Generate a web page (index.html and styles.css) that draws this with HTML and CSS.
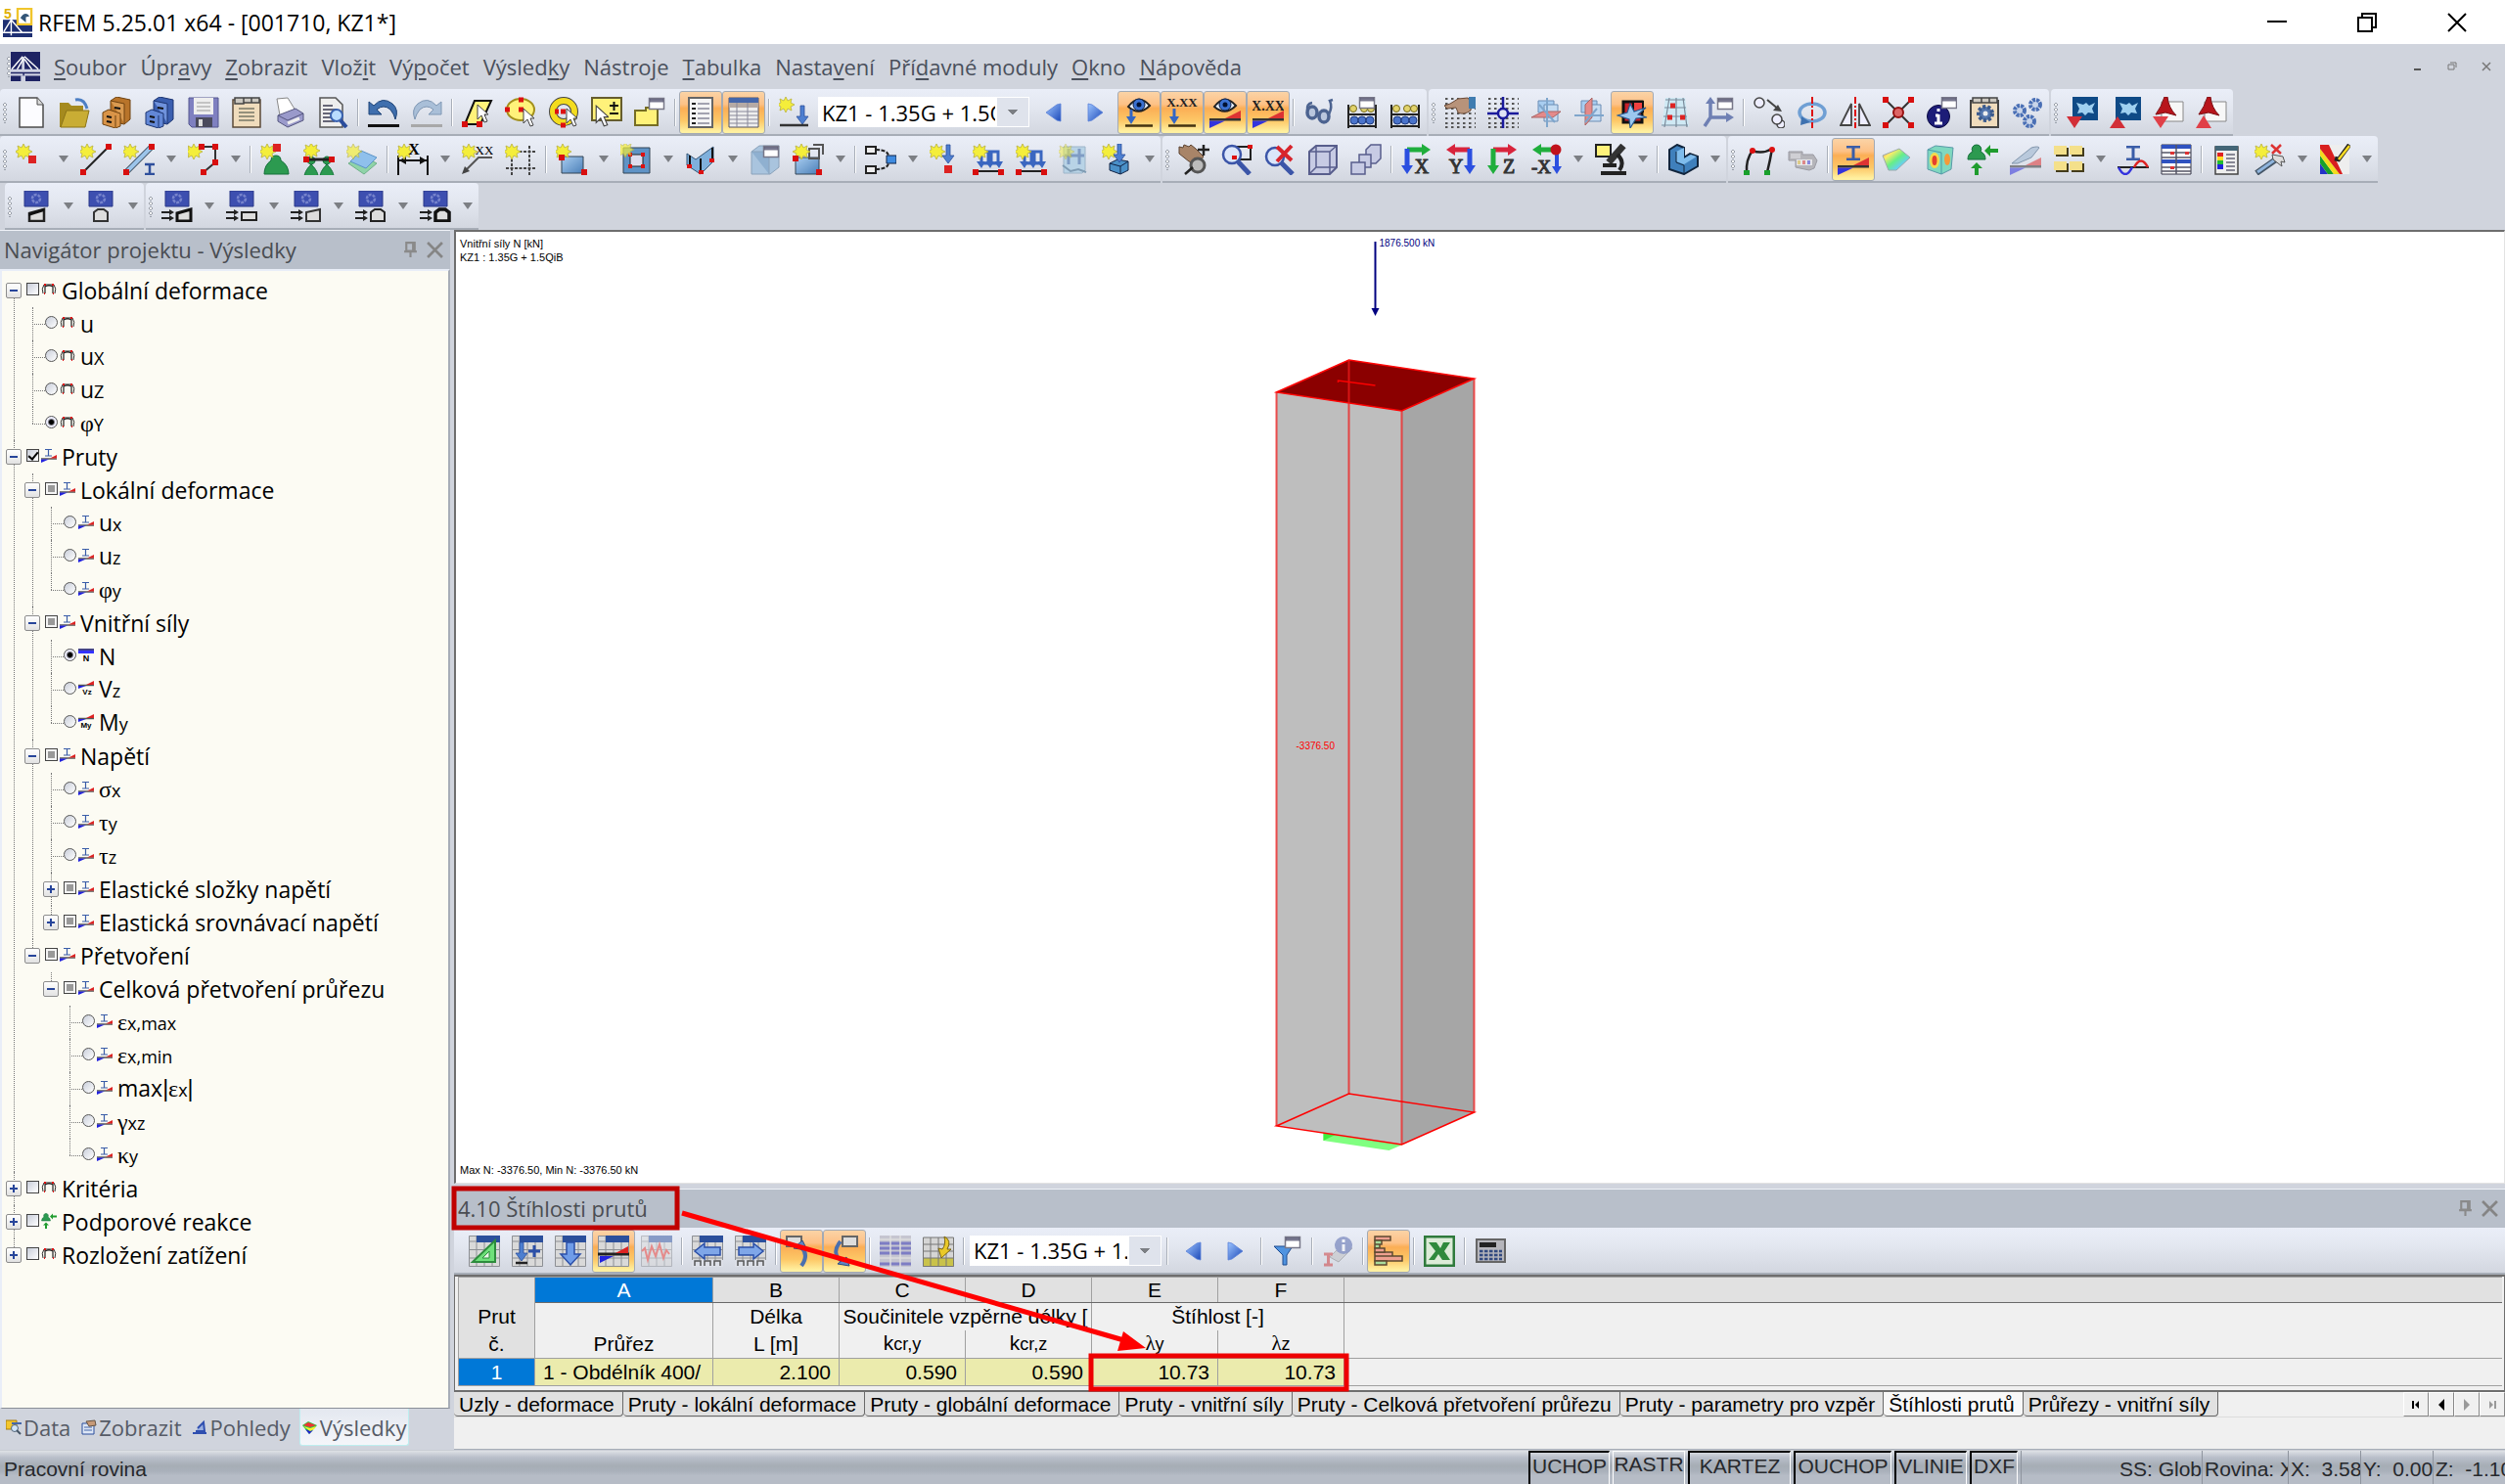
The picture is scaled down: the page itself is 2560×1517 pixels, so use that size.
FILE: index.html
```html
<!DOCTYPE html>
<html lang="cs">
<head>
<meta charset="utf-8">
<title>RFEM 5.25.01 x64 - [001710, KZ1*]</title>
<link rel="stylesheet" href="styles.css">
</head>
<body>
<svg class="defs" aria-hidden="true">
<defs>
<linearGradient id="g-sky" x1="0" y1="0" x2="1" y2="1"><stop offset="0" stop-color="#a9cdf0"/><stop offset="1" stop-color="#4a7fb8"/></linearGradient>
<linearGradient id="g-arr" x1="0" y1="0" x2="1" y2="1"><stop offset="0" stop-color="#9cc4ff"/><stop offset="1" stop-color="#1c49b8"/></linearGradient>
<linearGradient id="g-rain" x1="0" y1="0" x2="1" y2="1"><stop offset="0" stop-color="#f66"/><stop offset=".25" stop-color="#fe6"/><stop offset=".5" stop-color="#6e8"/><stop offset=".75" stop-color="#6cf"/><stop offset="1" stop-color="#88f"/></linearGradient>
<path id="star" d="M7 0l2 4 4-2-1 4 4 2-4 2 1 4-4-2-2 4-2-4-4 2 1-4-4-2 4-2-1-4 4 2z" fill="#f4ee3a" stroke="#b9b13c" stroke-width=".8"/>
<path id="node" d="M0 0h6v6h-6z" fill="#d80f0f"/>
<path id="down" d="M-2 0h4v11h4l-6 8-6-8h4z" fill="#4d7fd0" stroke="#2b4f9c" stroke-width=".8"/>
<path id="beam" d="M9 2h14v2.500h-5.500v10H23V17H9v-2.500h5.500v-10H9z" fill="#3a5da8"/>
<g id="diag"><path d="M0 22h32v2.500H0z" fill="#333"/><path d="M16 22l16-8v8z" fill="#d33"/><path d="M0 24.500h16L0 32z" fill="#33d"/></g>
<g id="sheet"><path d="M0 0h32v32H0z" fill="#d9d9d9"/><path d="M0 6h32M0 14.500h32M0 23h32M8 0v32M16 6v26M24 6v26M.5.500h31v31H.5z" stroke="#8c8f94" fill="none"/><path d="M8 0h24v7H8z" fill="#2b4f9c"/></g>
<g id="win"><path d="M.5.500h15v11H.5z" fill="#fff" stroke="#778" stroke-width="1.500"/><path d="M1 1h14v3.500H1z" fill="#335a"/></g>
<g id="dots"><path d="M1 2h31M1 7h31M1 12h31M1 17h31M1 22h31M1 27h31M1 31h31" stroke="#555" stroke-width="2" stroke-dasharray="2.500 3.500"/></g>
<path id="cone" d="M8 6a4 4 0 1 1 .1 0c3 3 7 8 7 13H1c0-5 4-10 7-13z" fill="#2c9a50" stroke="#14703a"/>
<g id="eye"><path d="M5 10Q16-4 27 9Q16 20 5 10z" fill="#e8f0ff" stroke="#222" stroke-width="2"/><circle cx="16" cy="8" r="6" fill="#3a70d0" stroke="#124"/><circle cx="16" cy="8" r="2.500" fill="#013"/></g>
<g id="abacus"><path d="M2 8v24M30 8v24M2 18h28M2 30h28" stroke="#222" stroke-width="2" fill="none"/><g fill="#e2d36b" stroke="#776b1c"><circle cx="7" cy="12" r="3.500"/><circle cx="18" cy="12" r="3.500"/><circle cx="25" cy="12" r="3.500"/></g><g fill="#4a74cc" stroke="#1f3c80"><circle cx="8" cy="24" r="4"/><circle cx="16" cy="24" r="4"/><circle cx="24" cy="24" r="4"/></g></g>
<g id="cards"><path d="M8 4h16v12H8z" fill="#a8cdf0" stroke="#6b8db5"/><path d="M14 8h14v17H14z" fill="#c5dcf2" stroke="#6b8db5"/></g>
<symbol id="i-app" viewBox="0 0 32 32"><path d="M0 0h32v32H0z" fill="#1e2363"/><path d="M0 19h12V6l3-1v14h17v7H0z" fill="#cfd2e2"/><path d="M13 5L1 19M15 5l15 14M14 7L7 19M15 8l8 11" stroke="#fff" stroke-width="1.500" fill="none"/><path d="M0 23h32M14 22v9" stroke="#1e2363" stroke-width="1.500"/><path d="M11 26h5v6h-5z" fill="#cfd2e2"/></symbol>
<symbol id="i-logo" viewBox="0 0 32 32"><path d="M0 13h32v19H0z" fill="#1e2f72"/><path d="M0 27h32M9 12v18M9 13L1 26M9 13l12 14" stroke="#fff" stroke-width="1.500" fill="none"/><path d="M16 1h15v17H16z" fill="#fff" stroke="#f0c52c" stroke-width="2.500"/><path d="M19 11q5-8 10-2l-4 1v6z" fill="#357"/><text x="1" y="12" font-size="15" font-weight="700" fill="#e0b000" font-family="Liberation Sans">5</text></symbol>
<symbol id="i-new" viewBox="0 0 32 32"><path d="M4 1h18l6 7v23H4z" fill="#fcfcff" stroke="#4b4b4b" stroke-width="1.500"/><path d="M22 1v7h6" fill="#ddd" stroke="#4b4b4b"/></symbol>
<symbol id="i-open" viewBox="0 0 32 32"><path d="M1 31V6h9l3 3h12v22z" fill="#a58a1e"/><path d="M2 31l6-17h23l-4 17z" fill="#c9ad34" stroke="#8c7416"/><path d="M17 3q9-2 12 9" stroke="#4d7fc4" stroke-width="3" fill="none"/></symbol>
<symbol id="i-cab" viewBox="0 0 32 32"><path d="M9 4l6-4 14 3v20l-6 5-14-3z" fill="#b8742a" stroke="#6e4210"/><path d="M9 4l14 3v20" fill="#d99a50" stroke="#6e4210"/><path d="M1 16l6-3 12 4v13l-5 2-13-4z" fill="#d99448" stroke="#6e4210"/><path d="M14 19v12" stroke="#6e4210"/><path d="M5 20l5 1M5 25l5 1M13 11l6 1" stroke="#111" stroke-width="2"/></symbol>
<symbol id="i-cabb" viewBox="0 0 32 32"><path d="M9 4l6-4 14 3v20l-6 5-14-3z" fill="#3b5fb0" stroke="#1c3470"/><path d="M9 4l14 3v20" fill="#6f92dc" stroke="#1c3470"/><path d="M1 16l6-3 12 4v13l-5 2-13-4z" fill="#6287d6" stroke="#1c3470"/><path d="M14 19v12" stroke="#1c3470"/><path d="M5 20l5 1M5 25l5 1M13 11l6 1" stroke="#111" stroke-width="2"/></symbol>
<symbol id="i-save" viewBox="0 0 32 32"><path d="M1 1h30v30H4l-3-3z" fill="#7f80c0" stroke="#55568f"/><path d="M6 1h20v17H6z" fill="#eee"/><path d="M9 6h14M9 10h14M9 14h14" stroke="#999"/><path d="M8 21h17v10H8z" fill="#4a4a5c"/><path d="M11 23h4v7h-4z" fill="#ddd"/></symbol>
<symbol id="i-note" viewBox="0 0 32 32"><path d="M2 3h28v28H2z" fill="#f0dcbc" stroke="#5b4a38" stroke-width="1.500"/><path d="M4 1h9v6H4zM13 1h8v5h-8zM21 1h8v5h-8z" fill="#ccc8c0" stroke="#444" stroke-width="1.500"/><path d="M8 12h16M8 16h16M8 20h16M8 24h16" stroke="#776" stroke-width="1.500"/></symbol>
<symbol id="i-print" viewBox="0 0 32 32"><path d="M3 2l11-1 8 13-16 5z" fill="#fff" stroke="#888"/><path d="M4 19l18-7 8 5v7l-16 7-10-6z" fill="#9a9acb" stroke="#55567f"/><path d="M4 19l10 5 16-7" fill="none" stroke="#55567f"/><path d="M14 27l12-5" stroke="#eee" stroke-width="3"/></symbol>
<symbol id="i-prev" viewBox="0 0 32 32"><path d="M3 1h16l7 7v23H3z" fill="#eee" stroke="#555" stroke-width="1.500"/><path d="M6 9h10M6 13h14M6 17h10M6 21h8M6 25h12" stroke="#667" stroke-width="2"/><circle cx="20" cy="19" r="6" fill="#b9dcff" stroke="#3a62b0" stroke-width="2"/><path d="M24 24l6 7" stroke="#2a4c9c" stroke-width="4"/></symbol>
<symbol id="i-undo" viewBox="0 0 32 32"><path d="M1 5v13h13l-5-5q7-6 14 0 4 5 5 10 4-10-3-16-10-8-19 2z" fill="#3f6fae" stroke="#1f4478"/><path d="M0 28h32v3H0z" fill="#111"/></symbol>
<symbol id="i-redo" viewBox="0 0 32 32"><path d="M31 5v13H18l5-5q-7-6-14 0-4 5-5 10Q0 13 7 7q10-8 19 2z" fill="#a9bfd8" stroke="#7f97b4"/><path d="M0 28h32v3H0z" fill="#a8a8a8"/></symbol>
<symbol id="i-cur" viewBox="0 0 12 20"><path d="M1 1v15l4-4 3 7 3-1-3-7h4z" fill="#fff" stroke="#444"/></symbol>
<symbol id="i-selp" viewBox="0 0 32 32"><path d="M13 4h17L19 28H3z" fill="#fff27a" stroke="#111" stroke-width="2"/><use href="#node" x="0" y="25"/><use href="#node" x="15" y="25"/><use href="#i-cur" x="15" y="7" width="12" height="20"/></symbol>
<symbol id="i-sele" viewBox="0 0 32 32"><ellipse cx="16" cy="13" rx="14" ry="11" fill="#fff27a" stroke="#a3901c" stroke-width="2"/><path d="M14 3h5M14 13h5M0 13h5" stroke="#d11" stroke-width="5"/><use href="#i-cur" x="18" y="11" width="12" height="20"/></symbol>
<symbol id="i-selc" viewBox="0 0 32 32"><circle cx="16" cy="15" r="11" fill="none" stroke="#444" stroke-width="8"/><circle cx="16" cy="15" r="11" fill="none" stroke="#f3dc1e" stroke-width="6"/><path d="M13 15h5M13 29h5M7 15h4" stroke="#d11" stroke-width="5"/><use href="#i-cur" x="18" y="11" width="12" height="20"/></symbol>
<symbol id="i-selr" viewBox="0 0 32 32"><path d="M1 1h30v23H1z" fill="#fff27a" stroke="#665d2e" stroke-width="2"/><path d="M19 9h9M23.500 5v9M19 17h9" stroke="#111" stroke-width="2"/><use href="#i-cur" x="4" y="8" width="14" height="23"/></symbol>
<symbol id="i-seln" viewBox="0 0 32 32"><path d="M1 14h11v-3h12v18H1z" fill="#fff27a" stroke="#766d24" stroke-width="2"/><use href="#win" x="15" y="1"/></symbol>
<symbol id="i-list" viewBox="0 0 32 32"><path d="M4 1h24v30H4z" fill="#f5f5f5" stroke="#666" stroke-width="2"/><path d="M7 7h4M7 12h4M7 17h4M7 22h4M7 27h4" stroke="#222" stroke-width="2"/><path d="M13 7h12M13 12h12M13 17h12M13 22h12M13 27h12" stroke="#889" stroke-width="1.500"/></symbol>
<symbol id="i-tab" viewBox="0 0 32 32"><path d="M1 1h30v30H1z" fill="#eee" stroke="#556"/><path d="M1 1h30v5H1z" fill="#46a"/><path d="M1 6h30v5H1z" fill="#b5aaa5"/><path d="M1 15h30M1 19h30M1 23h30M1 27h30M9 6v25M20 6v25" stroke="#889"/></symbol>
<symbol id="i-load" viewBox="0 0 32 32"><use href="#star"/><use href="#down" x="24" y="9"/><path d="M1 29h29" stroke="#333" stroke-width="2.500"/></symbol>
<symbol id="i-left" viewBox="0 0 32 32"><path d="M24 7v18l-4-1L9 16l11-8z" fill="url(#g-arr)" stroke="#5a80d8" stroke-width=".8"/></symbol>
<symbol id="i-right" viewBox="0 0 32 32"><path d="M8 7v18l4-1 11-8-11-8z" fill="url(#g-arr)" stroke="#5a80d8" stroke-width=".8"/></symbol>
<symbol id="i-eyel" viewBox="0 0 32 32"><use href="#eye"/><path d="M8 13v8" stroke="#3466c4" stroke-width="3"/><path d="M3 20h10l-5 8z" fill="#3466c4"/><path d="M2 29.500h28" stroke="#443311" stroke-width="2.500"/></symbol>
<symbol id="i-xl" viewBox="0 0 32 32"><text x="16" y="10" font-size="13" font-weight="700" text-anchor="middle" font-family="Liberation Serif" fill="#222">X.XX</text><path d="M8 12v10" stroke="#3466c4" stroke-width="3"/><path d="M3 20h10l-5 8z" fill="#3466c4"/><path d="M2 29.500h28" stroke="#443311" stroke-width="2.500"/></symbol>
<symbol id="i-eyed" viewBox="0 0 32 32"><use href="#diag"/><use href="#eye"/></symbol>
<symbol id="i-xd" viewBox="0 0 32 32"><use href="#diag"/><text x="16" y="14" font-size="14" font-weight="700" text-anchor="middle" font-family="Liberation Serif" fill="#222">X.XX</text></symbol>
<symbol id="i-glass" viewBox="0 0 32 32"><ellipse cx="9" cy="16" rx="5" ry="6" fill="#b9c6dd" stroke="#4c6390" stroke-width="3.500"/><ellipse cx="21" cy="20" rx="5" ry="6" fill="#b9c6dd" stroke="#4c6390" stroke-width="3.500"/><path d="M4 14Q3 7 9 6M26 18q4-8 1-14l3-1" fill="none" stroke="#4c6390" stroke-width="2.500"/></symbol>
<symbol id="i-abaw" viewBox="0 0 32 32"><use href="#abacus"/><use href="#win" x="13" y="0"/></symbol>
<symbol id="i-aba" viewBox="0 0 32 32"><use href="#abacus"/></symbol>
<symbol id="i-hand" viewBox="0 0 32 32"><use href="#dots"/><path d="M0 9l6-2 8-5 10-1 3 4v9q-7 5-13 2l-2-5-9 1z" fill="#b8937a" stroke="#6d4c38"/><path d="M25 0h7v12h-7z" fill="#3f7cb0"/></symbol>
<symbol id="i-snap" viewBox="0 0 32 32"><use href="#dots"/><path d="M16 0v32M0 17h32" stroke="#1a1a9c" stroke-width="2.500"/><circle cx="16" cy="17" r="5" fill="#dfe3f5" stroke="#1a1a9c" stroke-width="2.500"/></symbol>
<symbol id="i-plan" viewBox="0 0 32 32"><use href="#cards"/><path d="M1 21l12-6h18l-8 6H6z" fill="#e48a8a" stroke="#a66"/><path d="M17 1v30M9 8l16 18" stroke="#7fa6cc" stroke-width="2"/></symbol>
<symbol id="i-plan2" viewBox="0 0 32 32"><use href="#cards"/><path d="M12 8l7-7v20l-7 8z" fill="#e48a8a" stroke="#a66"/><path d="M1 19h30M12 26l12-14" stroke="#7fa6cc" stroke-width="2"/></symbol>
<symbol id="i-plan3" viewBox="0 0 32 32"><path d="M7 5h19v21H7z" fill="#c8202a" stroke="#111" stroke-width="3"/><path d="M17 5h10v10H17z" fill="#f04040" stroke="#111" stroke-width="2"/><path d="M14 7l4 8 12-4-8 7 9 3-11 1-6 10 -1-9-12-4 10-3z" fill="#9cc8ee" stroke="#2a5a90" stroke-width="1.200"/></symbol>
<symbol id="i-gridr" viewBox="0 0 32 32"><path d="M6 1h20l4 29H2z" fill="#cfe9f4"/><path d="M6 3h20M5 11h22M4 20h24M2 29h27M10 1L5 31M17 1v30M24 1l4 30" stroke="#7a8a9a" stroke-width="1.200"/><path d="M11 9h5M8 21h5M21 21h5" stroke="#d22" stroke-width="5"/></symbol>
<symbol id="i-axw" viewBox="0 0 32 32"><path d="M8 3v18h18M8 21l-6 9" stroke="#6f80b4" stroke-width="3.500" fill="none"/><path d="M3 7l5-7 5 7zM24 16l8 5-8 5z" fill="#6f80b4"/><use href="#win" x="15" y="1"/></symbol>
<symbol id="i-copy" viewBox="0 0 32 32"><g fill="#eef" stroke="#444" stroke-width="1.500"><circle cx="6" cy="6" r="5"/><circle cx="28" cy="28" r="4"/><circle cx="24" cy="23" r="5"/></g><path d="M14 3l12 10" stroke="#444" stroke-width="2"/><path d="M29 15l-9-1 5-6z" fill="#444"/></symbol>
<symbol id="i-rot" viewBox="0 0 32 32"><ellipse cx="16" cy="16" rx="13" ry="9" fill="none" stroke="#6f9fd4" stroke-width="3.500"/><path d="M5 20l9 6-10 3z" fill="#3f72b0"/><path d="M16 0v32" stroke="#d11" stroke-width="2" stroke-dasharray="7 2 2 2"/></symbol>
<symbol id="i-mir" viewBox="0 0 32 32"><path d="M12 7v22H1zM20 7v22h11z" fill="#eef" stroke="#444" stroke-width="1.800"/><path d="M16 0v32" stroke="#d11" stroke-width="2" stroke-dasharray="7 2 2 2"/></symbol>
<symbol id="i-xnode" viewBox="0 0 32 32"><path d="M3 3l26 26M29 3L3 29" stroke="#333" stroke-width="2"/><use href="#node"/><use href="#node" x="26"/><use href="#node" y="26"/><use href="#node" x="26" y="26"/><circle cx="16" cy="16" r="5" fill="#d66" stroke="#911" stroke-width="2"/></symbol>
<symbol id="i-info" viewBox="0 0 32 32"><circle cx="13" cy="20" r="11.500" fill="#1d1d78" stroke="#0a0a40"/><path d="M13 12v3M13 18v9M10 19h3M9 27h8" stroke="#fff" stroke-width="3"/><use href="#win" x="16" y="0"/></symbol>
<symbol id="i-prot" viewBox="0 0 32 32"><path d="M2 4h28v27H2z" fill="#f0dcbc" stroke="#444" stroke-width="2"/><path d="M4 1h9v5H4zM13 1h8v5h-8zM21 1h8v5h-8z" fill="#ccc8c0" stroke="#444" stroke-width="1.500"/><circle cx="17" cy="17" r="7" fill="#5577ae" stroke="#3b5a8c" stroke-width="4" stroke-dasharray="3 2"/><circle cx="17" cy="17" r="2.500" fill="#eee"/></symbol>
<symbol id="i-gear" viewBox="0 0 32 32"><g fill="#c9d5ea" stroke="#4a6fb5" stroke-width="4" stroke-dasharray="3 1"><circle cx="8" cy="14" r="5"/><circle cx="24" cy="8" r="5"/><circle cx="18" cy="25" r="5"/></g></symbol>
<symbol id="i-mdn" viewBox="0 0 32 32"><path d="M6 0h26v24H6z" fill="#0f4a86"/><path d="M10 6l7 2 3-2 3 3 6-3-3 6 2 5-6-1-3 3-3-3-5 1 2-5z" fill="#9fd0f0"/><path d="M0 20h16l-8 12z" fill="#d22f38"/></symbol>
<symbol id="i-mup" viewBox="0 0 32 32"><path d="M6 0h26v24H6z" fill="#0f4a86"/><path d="M10 6l7 2 3-2 3 3 6-3-3 6 2 5-6-1-3 3-3-3-5 1 2-5z" fill="#9fd0f0"/><path d="M0 32h16L8 20z" fill="#d22f38"/></symbol>
<symbol id="i-pdn" viewBox="0 0 32 32"><path d="M9 5h22v20H9z" fill="#f7f7f7" stroke="#888"/><path d="M12 0q-3 10-9 18l10-2 11 3q-8-8-9-19z" fill="#b8151c" stroke="#7c0c10"/><path d="M0 20h16l-8 12z" fill="#e04048"/></symbol>
<symbol id="i-pup" viewBox="0 0 32 32"><path d="M9 5h22v20H9z" fill="#f7f7f7" stroke="#888"/><path d="M12 0q-3 10-9 18l10-2 11 3q-8-8-9-19z" fill="#b8151c" stroke="#7c0c10"/><path d="M0 32h16L8 19z" fill="#e04048"/></symbol>
<symbol id="i-nnode" viewBox="0 0 32 32"><use href="#star" x="1"/><path d="M13 12h8v8h-8z" fill="#d22"/></symbol>
<symbol id="i-nline" viewBox="0 0 32 32"><path d="M3 29L29 3" stroke="#222" stroke-width="2"/><use href="#star"/><use href="#node" x="26"/><use href="#node" y="26"/></symbol>
<symbol id="i-nmem" viewBox="0 0 32 32"><path d="M3 29L28 4" stroke="#345" stroke-width="6"/><path d="M3 29L28 4" stroke="#9cc4ea" stroke-width="4"/><use href="#star"/><use href="#node" x="26"/><use href="#node" y="26"/><path d="M22 21h10M27 21v10M22 31h10" stroke="#2f4f9c" stroke-width="2.500"/></symbol>
<symbol id="i-npoly" viewBox="0 0 32 32"><path d="M14 3h14v16l-12 10" stroke="#333" stroke-width="2" fill="none"/><use href="#star" x="-1"/><use href="#node" x="11"/><use href="#node" x="25"/><use href="#node" x="25" y="16"/><use href="#node" x="13" y="26"/></symbol>
<symbol id="i-nsup" viewBox="0 0 32 32"><path d="M16 12q5 0 5 5 8 5 8 14H4q0-9 7-14 0-5 5-5z" fill="#2c9a50" stroke="#14703a"/><use href="#star"/><path d="M13 0h8v8h-8z" fill="#d22"/></symbol>
<symbol id="i-nsup2" viewBox="0 0 32 32"><use href="#cone" x="0" y="15"/><use href="#cone" x="16" y="15"/><path d="M3 16h26" stroke="#222" stroke-width="3"/><use href="#star" x="1" y="-1"/><use href="#node" y="13"/><use href="#node" x="26" y="13"/></symbol>
<symbol id="i-nsurf" viewBox="0 0 32 32"><path d="M2 20l14-8 15 8-13 11z" fill="#8fd3a8" stroke="#6fb088"/><path d="M4 18l11-11 16 7-11 11z" fill="#8fc0ec" stroke="#5b94c8"/><use href="#star" opacity=".7"/></symbol>
<symbol id="i-ndim" viewBox="0 0 32 32"><path d="M1 12v20M31 12v20M2 17h28" stroke="#111" stroke-width="2"/><path d="M2 17l7-4v8zM30 17l-7-4v8z" fill="#111"/><use href="#star"/><text x="17" y="11" font-size="16" font-weight="700" text-anchor="middle" font-family="Liberation Serif">X</text></symbol>
<symbol id="i-nxx" viewBox="0 0 32 32"><path d="M31 14H17L2 29" stroke="#555" stroke-width="2" fill="none"/><path d="M0 31l3-8 5 5z" fill="#444"/><use href="#star"/><text x="23" y="11" font-size="13" text-anchor="middle" font-family="Liberation Serif">XX</text></symbol>
<symbol id="i-ngrid" viewBox="0 0 32 32"><path d="M7 2v30M25 2v30M1 8h30M1 25h30" stroke="#444" stroke-width="2" stroke-dasharray="3 1.500"/><use href="#star"/></symbol>
<symbol id="i-nrect" viewBox="0 0 32 32"><path d="M6 13h22v17H6z" fill="url(#g-sky)" stroke="#345"/><use href="#star"/><use href="#node" x="3" y="11"/><use href="#node" x="26" y="26"/></symbol>
<symbol id="i-nopen" viewBox="0 0 32 32"><path d="M3 4h27v26H3z" fill="#5f93c6" stroke="#345"/><path d="M10 11h13v12H10z" fill="#dde" stroke="#222"/><g fill="#d11"><path d="M8 9h4v4H8zM21 9h4v4h-4zM8 21h4v4H8zM21 21h4v4h-4z"/></g><use href="#star" opacity=".7" x="-2" y="-2"/></symbol>
<symbol id="i-nwall" viewBox="0 0 32 32"><path d="M2 10l9 6L29 3v15L16 31 2 22z" fill="#7fb0dc" stroke="#357"/><path d="M5 12v12M28 4v12M16 15v12" stroke="#111" stroke-width="2"/><path d="M2 21h5v4H2zM14 27h5v4h-5zM25 15h5v4h-5z" fill="#d11"/></symbol>
<symbol id="i-nsol" viewBox="0 0 32 32"><path d="M2 8l8-6h20v22l-9 7H2z" fill="#a9c4de" stroke="#8aa2ba"/><path d="M2 8h18v23" fill="#8fb0d0" stroke="#8aa2ba"/><use href="#win" x="14" y="2"/></symbol>
<symbol id="i-nset" viewBox="0 0 32 32"><path d="M3 14h24v17H3z" fill="url(#g-sky)" stroke="#345"/><path d="M17 5h10v10H17zM21 1h10v10" fill="none" stroke="#555" stroke-width="2"/><use href="#star" x="2"/><use href="#node" y="12"/><use href="#node" x="24" y="26"/></symbol>
<symbol id="i-comb" viewBox="0 0 32 32"><path d="M1 3h10v7H1zM1 23h10v7H1z" fill="#eee" stroke="#222" stroke-width="2"/><path d="M11 6q12 0 13 6M11 26q12 0 13-6" stroke="#222" stroke-width="2" fill="none" stroke-dasharray="4 1.500"/><path d="M22 12h10v8H22z" fill="#3f8be0" stroke="#124"/></symbol>
<symbol id="i-nnl" viewBox="0 0 32 32"><use href="#star"/><use href="#down" x="19" y="1"/><path d="M15 22h8v8h-8z" fill="#d22"/></symbol>
<symbol id="i-nml" viewBox="0 0 32 32"><path d="M9 8h7v12h-7zM19 8h7v12h-7z" fill="none" stroke="#3a66c0" stroke-width="3"/><path d="M4 18h9l-4 7zM13 18h9l-4 7zM22 18h9l-4 7z" fill="#3a66c0"/><path d="M2 28h28" stroke="#222" stroke-width="2"/><use href="#star"/><use href="#node" y="26"/><use href="#node" x="26" y="26"/></symbol>
<symbol id="i-nsl" viewBox="0 0 32 32"><path d="M5 3h22v24l-3 3H5z" fill="#b8d3e6" stroke="#9db4c8"/><path d="M10 5v16M21 5v16M6 12h20" stroke="#7f9cc4" stroke-width="3"/><path d="M4 22l8 6 8-2 8 3" stroke="#7f9cb4" stroke-width="2" fill="none"/><use href="#star" opacity=".5"/></symbol>
<symbol id="i-nbl" viewBox="0 0 32 32"><path d="M8 20l8-4 11 2v9l-8 4-11-4z" fill="#4a90c8" stroke="#124"/><path d="M8 20l11 3v8M19 23l8-5" fill="none" stroke="#124"/><use href="#star"/><use href="#down" x="18" y="0"/></symbol>
<symbol id="i-pan" viewBox="0 0 32 32"><path d="M1 3l4 1 1-3 5 2 2-2 5 4 8 8-6 8-9-3L1 10z" fill="#a88468" stroke="#5c4432"/><circle cx="20" cy="22" r="7" fill="#bbb" stroke="#555" stroke-width="3"/><path d="M26 1v11M20 6h12M7 31l8-7" stroke="#222" stroke-width="2.500"/></symbol>
<symbol id="i-zwin" viewBox="0 0 32 32"><path d="M12 3h18v13H12z" fill="none" stroke="#222" stroke-width="2"/><circle cx="11" cy="11" r="9" fill="#dbe6fa" stroke="#3b55a8" stroke-width="2.500"/><path d="M17 18l12 13" stroke="#3b55a8" stroke-width="5"/><path d="M11 14h5M27 3h5" stroke="#d11" stroke-width="4"/></symbol>
<symbol id="i-zx" viewBox="0 0 32 32"><circle cx="11" cy="13" r="9" fill="#dbe6fa" stroke="#3b55a8" stroke-width="2.500"/><path d="M17 19l12 12" stroke="#3b55a8" stroke-width="5"/><path d="M13 3l15 14M28 2L13 18" stroke="#d8242c" stroke-width="4"/></symbol>
<symbol id="i-cube" viewBox="0 0 32 32"><path d="M2 8l7-6h21v22l-7 7H2z" fill="#c7cbe4" stroke="#585e8c" stroke-width="2"/><path d="M2 8h21v23M23 8l7-6M9 2v22L2 31M9 24h21" fill="none" stroke="#585e8c" stroke-width="1.500"/></symbol>
<symbol id="i-multi" viewBox="0 0 32 32"><g fill="#c7cbe4" stroke="#585e8c" stroke-width="1.500"><path d="M16 6l5-5h10v14l-5 5H16z"/><path d="M9 11h12v13H9z"/><path d="M1 19h14v12H1z"/></g></symbol>
<symbol id="i-vx" viewBox="0 0 32 32"><path d="M6 6h16" stroke="#1fae3c" stroke-width="5"/><path d="M21 0l9 6-9 6z" fill="#1fae3c"/><path d="M6 5v18" stroke="#2b4fe0" stroke-width="5"/><path d="M0 22h12l-6 9z" fill="#2b4fe0"/><text x="21" y="30" font-size="20" text-anchor="middle" font-family="Liberation Serif" fill="#333" stroke="#333">X</text></symbol>
<symbol id="i-vy" viewBox="0 0 32 32"><path d="M10 6h16" stroke="#d8243c" stroke-width="5"/><path d="M11 0L2 6l9 6z" fill="#d8243c"/><path d="M26 5v18" stroke="#2b4fe0" stroke-width="5"/><path d="M20 22h12l-6 9z" fill="#2b4fe0"/><text x="12" y="30" font-size="20" text-anchor="middle" font-family="Liberation Serif" fill="#333" stroke="#333">Y</text></symbol>
<symbol id="i-vz" viewBox="0 0 32 32"><path d="M6 6h16" stroke="#d8243c" stroke-width="5"/><path d="M21 0l9 6-9 6z" fill="#d8243c"/><path d="M6 5v18" stroke="#1fae3c" stroke-width="5"/><path d="M0 22h12l-6 9z" fill="#1fae3c"/><text x="22" y="30" font-size="20" text-anchor="middle" font-family="Liberation Serif" fill="#333" stroke="#333">Z</text></symbol>
<symbol id="i-vmx" viewBox="0 0 32 32"><path d="M10 6h16" stroke="#1fae3c" stroke-width="5"/><path d="M11 0L2 6l9 6z" fill="#1fae3c"/><path d="M27 5v18" stroke="#2b4fe0" stroke-width="4"/><path d="M22 23h10l-5 8z" fill="#2b4fe0"/><circle cx="26" cy="6" r="5.500" fill="#c1121c"/><text x="11" y="30" font-size="19" text-anchor="middle" font-family="Liberation Serif" fill="#333" stroke="#333">-X</text></symbol>
<symbol id="i-micro" viewBox="0 0 32 32"><path d="M1 1h15v12H1z" fill="#fff27a" stroke="#222" stroke-width="2"/><path d="M29 2L14 19" stroke="#333" stroke-width="7"/><path d="M23 11q8 8 2 16M8 22h14M6 30h26" stroke="#222" stroke-width="4" fill="none"/></symbol>
<symbol id="i-ren" viewBox="0 0 32 32"><path d="M2 6l8-5 7 3v10l6-4 8 3v10l-14 8L2 26z" fill="#3f80bc" stroke="#10243c" stroke-width="2"/><path d="M9 8l8-4v11l7-4 6 2-13 8-8-3z" fill="#7fbcec"/><path d="M9 8v11l8 3v9" stroke="#10243c" fill="none"/></symbol>
<symbol id="i-def" viewBox="0 0 32 32"><path d="M3 30Q2 16 9 7M9 7q10 4 20-2M29 5q-2 12-5 24" stroke="#222" stroke-width="2.500" fill="none"/><circle cx="9" cy="7" r="3" fill="#d11"/><circle cx="29" cy="6" r="3" fill="#d11"/><path d="M0 27h6v5H0zM21 27h6v5h-6z" fill="#19a02c"/></symbol>
<symbol id="i-panel" viewBox="0 0 32 32"><path d="M2 8h14v3h11l4 6-3 8-5 2-14-3v-7H2z" fill="#b5b5ba" stroke="#9a9aa2"/><path d="M4 10h10v5H4z" fill="#cfcfd4"/><path d="M10 16h16v6H10z" fill="#e6e6ea"/><path d="M11 19h3" stroke="#dc8" stroke-width="4"/><path d="M16 19h3" stroke="#d88" stroke-width="4"/><path d="M21 19h3" stroke="#88d" stroke-width="4"/></symbol>
<symbol id="i-memr" viewBox="0 0 32 32"><use href="#diag"/><use href="#beam"/></symbol>
<symbol id="i-surfr" viewBox="0 0 32 32"><path d="M2 12l17-7 11 9-14 13-8 0z" fill="url(#g-rain)" stroke="#9aa"/></symbol>
<symbol id="i-solr" viewBox="0 0 32 32"><path d="M4 6l8-4 18 2-2 22-10 5L4 26z" fill="#7fd8c0" stroke="#5a9aa8"/><path d="M4 6l14 3v22" fill="none" stroke="#4a9aa8"/><ellipse cx="11" cy="17" rx="5" ry="8" fill="#f5d94a"/><ellipse cx="11" cy="17" rx="2.500" ry="5" fill="#e5402c"/><ellipse cx="24" cy="16" rx="3" ry="6" fill="#f59a3a"/></symbol>
<symbol id="i-reac" viewBox="0 0 32 32"><path d="M10 1a4.500 4.500 0 0 1 4 7q5 2 5 8H1q0-6 5-8a4.500 4.500 0 0 1 4-7z" fill="#2c9a50" stroke="#14703a"/><path d="M32 5H24V1l-6 6 6 6V9h8zM8 32V25H4l6-6 6 6h-4v7z" fill="#1f9c2e"/></symbol>
<symbol id="i-sec" viewBox="0 0 32 32"><g opacity=".55"><use href="#diag"/></g><path d="M2 20L22 4q7-2 8 0l-8 10-14 6z" fill="#b9c9dc" stroke="#8296ac"/></symbol>
<symbol id="i-four" viewBox="0 0 32 32"><path d="M3 4h13v9H3zM19 4h13v9H19zM3 20h13v9H3zM19 20h13v9H19z" fill="#443c1c"/><path d="M1 2h13v9H1zM17 2h13v9H17zM1 18h13v9H1zM17 18h13v9H17z" fill="#f4e08a"/></symbol>
<symbol id="i-sino" viewBox="0 0 32 32"><use href="#beam"/><path d="M0 24h32" stroke="#222" stroke-width="2"/><path d="M1 24q7 14 14 0" fill="none" stroke="#33d" stroke-width="2.500"/><path d="M17 24q7-13 14 0" fill="none" stroke="#d22" stroke-width="2.500"/></symbol>
<symbol id="i-rtab" viewBox="0 0 32 32"><path d="M1 1h30v30H1z" fill="#fff" stroke="#334"/><path d="M1 3h30M1 18h30" stroke="#2f52c0" stroke-width="4"/><path d="M1 9h30M1 14h30M1 24h30M1 28h30M16 1v30" stroke="#556" stroke-width="1.500"/><path d="M10 8h4v3h-4zM25 8h4v3h-4zM10 23h4v3h-4z" fill="#d33"/></symbol>
<symbol id="i-leg" viewBox="0 0 32 32"><path d="M4 3h23v28H4z" fill="#eee" stroke="#444" stroke-width="1.500"/><path d="M4 2h23v5H4z" fill="#467"/><path d="M6 9h6v4H6z" fill="#d22"/><path d="M6 13h6v4H6z" fill="#fd2"/><path d="M6 17h6v4H6z" fill="#2b3"/><path d="M6 21h6v5H6z" fill="#22d"/><path d="M15 11h9M15 15h9M15 19h9M15 23h9M15 27h9" stroke="#667" stroke-width="1.500"/></symbol>
<symbol id="i-wand" viewBox="0 0 32 32"><path d="M2 30L22 16" stroke="#456" stroke-width="6"/><path d="M3 29L20 17" stroke="#8fb4dc" stroke-width="3"/><path d="M17 1l10 9M27 1l-9 9" stroke="#d33" stroke-width="2.500"/><use href="#star"/><path d="M18 11l11 2 2 6-4-1 1 5-9-7z" fill="#ddd" stroke="#555"/></symbol>
<symbol id="i-flag" viewBox="0 0 32 32"><path d="M1 1h30v30H1z" fill="#eee"/><path d="M1 31V20l8 11z" fill="#2433c8"/><path d="M1 12l14 19H9L1 20z" fill="#18a02c"/><path d="M1 5l20 26h-6L1 12z" fill="#f3dc1e"/><path d="M1 1h9l14 30h-3L1 5z" fill="#d81f1f"/><path d="M31 1L20 16l-4-1" stroke="#222" stroke-width="4.500" fill="none"/><path d="M31 2L20 16" stroke="#fd2" stroke-width="2.500"/></symbol>
<g id="gearbox"><path d="M4 0h24v16H4z" fill="#3d4fb0" stroke="#2a3988"/><circle cx="16" cy="8" r="4" fill="none" stroke="#7784cc" stroke-width="2.500" stroke-dasharray="3 1"/></g>
<g id="sarr"><path d="M0 22h9M0 28h9" stroke="#222" stroke-width="2"/><path d="M8 19l5 3-5 3zM8 25l5 3-5 3z" fill="#222"/></g>
<symbol id="i-w1" viewBox="0 0 32 32"><use href="#gearbox"/><path d="M9 31v-8l15-4v12z" fill="#ddd" stroke="#222" stroke-width="2.500"/><path d="M8 23l16-5v3L8 26z" fill="#111"/></symbol>
<symbol id="i-w2" viewBox="0 0 32 32"><use href="#gearbox"/><path d="M9 31v-9l4-3h6l4 3v9z" fill="#ddd" stroke="#333" stroke-width="2"/></symbol>
<symbol id="i-w3" viewBox="0 0 32 32"><use href="#gearbox"/><use href="#sarr"/><path d="M16 31v-8l14-4v12z" fill="#ddd" stroke="#111" stroke-width="3"/></symbol>
<symbol id="i-w4" viewBox="0 0 32 32"><use href="#gearbox"/><use href="#sarr"/><path d="M16 30v-8h15v8z" fill="#ddd" stroke="#222" stroke-width="2"/></symbol>
<symbol id="i-w5" viewBox="0 0 32 32"><use href="#gearbox"/><use href="#sarr"/><path d="M16 31v-9l14-3v12z" fill="#ddd" stroke="#333" stroke-width="2"/></symbol>
<symbol id="i-w6" viewBox="0 0 32 32"><use href="#gearbox"/><use href="#sarr"/><path d="M16 31v-9l4-3h6l4 3v9z" fill="#ddd" stroke="#222" stroke-width="2"/></symbol>
<symbol id="i-w7" viewBox="0 0 32 32"><use href="#gearbox"/><use href="#sarr"/><path d="M16 31v-9l4-3h6l4 3v9z" fill="#ddd" stroke="#111" stroke-width="3.500"/></symbol>
<symbol id="i-pin" viewBox="0 0 16 16"><path d="M4 1h8v8H4zM2 9.500h12M8 10v5M10.500 1v8" stroke="#8a8a8a" stroke-width="2" fill="none"/></symbol>
<symbol id="i-x" viewBox="0 0 16 16"><path d="M1 1l14 14M15 1L1 15" stroke="#858585" stroke-width="2.500"/></symbol>
<symbol id="i-t1" viewBox="0 0 32 32"><use href="#sheet"/><path d="M27 5v22H4z" fill="#6fe07a" stroke="#2d8c3c" stroke-width="2"/><path d="M21 16v7h-7z" fill="#e8f5e8" stroke="#2d8c3c"/></symbol>
<symbol id="i-t2" viewBox="0 0 32 32"><use href="#sheet"/><use href="#down" x="10" y="7"/><path d="M4 28h12" stroke="#222" stroke-width="2.500"/><path d="M23 10v12M17 16h12" stroke="#2b4fa8" stroke-width="3"/></symbol>
<symbol id="i-t3" viewBox="0 0 32 32"><use href="#sheet"/><path d="M12 7h8v12h6L16 30 6 19h6z" fill="#6f9ce8" stroke="#2b4fa8" stroke-width="1.500"/></symbol>
<symbol id="i-t4" viewBox="0 0 32 32"><use href="#sheet"/><path d="M0 19h32" stroke="#222" stroke-width="3"/><path d="M18 18l13-7v7z" fill="#d22"/><path d="M2 21h14L2 28z" fill="#22d"/></symbol>
<symbol id="i-t5" viewBox="0 0 32 32"><g opacity=".5"><use href="#sheet"/></g><path d="M1 16l3-3 3 12 4-14 4 10 4-12 4 14 3-8 3 4" stroke="#e58a8a" stroke-width="2" fill="none"/></symbol>
<symbol id="i-t6" viewBox="0 0 32 32"><use href="#sheet"/><path d="M0 25h32v7H0z" fill="#dde0e8"/><path d="M3 31v-5h6v5M13 31v-5h6v5M23 31v-5h6v5" stroke="#555" stroke-width="1.500" fill="none"/><path d="M13 8v4h16v8H13v4L3 16z" fill="#7fa6e8" stroke="#2b4fa8" stroke-width="1.500"/></symbol>
<symbol id="i-t7" viewBox="0 0 32 32"><use href="#sheet"/><path d="M0 25h32v7H0z" fill="#dde0e8"/><path d="M3 31v-5h6v5M13 31v-5h6v5M23 31v-5h6v5" stroke="#555" stroke-width="1.500" fill="none"/><path d="M19 8v4H4v8h15v4l10-8z" fill="#7fa6e8" stroke="#2b4fa8" stroke-width="1.500"/></symbol>
<symbol id="i-t8" viewBox="0 0 32 32"><path d="M1 1h15v10H1z" fill="#ddd" stroke="#666" stroke-width="2"/><path d="M16 12q8 8 0 19" stroke="#4a6fae" stroke-width="4" fill="none"/><path d="M8 13l9-8 5 10z" fill="#5f86c4" stroke="#2b4a80"/></symbol>
<symbol id="i-t9" viewBox="0 0 32 32"><path d="M14 1h15v10H14z" fill="#ddd" stroke="#666" stroke-width="2"/><path d="M12 6q-10 12 1 20" stroke="#4a6fae" stroke-width="4" fill="none"/><path d="M9 29l9-7 3 9z" fill="#5f86c4" stroke="#2b4a80"/></symbol>
<symbol id="i-t10" viewBox="0 0 32 32"><path d="M0 0h32v32H0z" fill="#c5c5d0"/><path d="M0 8h32M0 13h32M0 18h32M0 29h32" stroke="#7d7dc4" stroke-width="3"/><path d="M11 0v32M21 0v32M0 4h32M0 23h32" stroke="#ddd" stroke-width="1.500"/></symbol>
<symbol id="i-t11" viewBox="0 0 32 32"><path d="M0 2h32v30H0z" fill="#d5d5d5"/><path d="M0 23h32v9H0z" fill="#c9c24a"/><path d="M0 9h32M0 16h32M0 23h32M8 2v30M16 2v30M24 2v30M.5 2v29.500h31V2z" stroke="#777" fill="none"/><path d="M22 1q8 4 3 13h4L19 23l-3-10 4 1q4-5 2-13z" fill="#e9c928" stroke="#7a6412"/></symbol>
<symbol id="i-filt" viewBox="0 0 32 32"><path d="M3 11h19l-6 9v10h-4V20z" fill="#4f93e0" stroke="#1f4c90"/><use href="#win" x="14" y="1"/></symbol>
<symbol id="i-tinf" viewBox="0 0 32 32"><g opacity=".45"><path d="M8 22L22 8l9 5-14 14z" fill="#bbb" stroke="#777"/><circle cx="22" cy="10" r="9" fill="#3a4fa0"/><path d="M22 4v3M22 9v7" stroke="#fff" stroke-width="3"/><path d="M2 19h9M6.500 19v11M2 30h9" stroke="#c22" stroke-width="3"/></g></symbol>
<symbol id="i-bars" viewBox="0 0 32 32"><g stroke="#5e4a30" stroke-width="1.500"><path d="M2 1h16v4H2zM2 17h18v4H2zM2 21h28v5H2z" fill="#eea090"/><path d="M2 5h7v4H2zM2 9h5v4H2zM2 26h12v4H2z" fill="#a8dc9c"/><path d="M2 13h10v4H2z" fill="#eea090"/></g></symbol>
<symbol id="i-xls" viewBox="0 0 32 32"><path d="M1 1h30v30H1z" fill="#dcecd8" stroke="#2f7a3c" stroke-width="3"/><path d="M5 7h8l4 6 3-6h7l-6 9 6 9h-8l-4-6-4 6H5l7-9z" fill="#2f8a3c"/></symbol>
<symbol id="i-calc" viewBox="0 0 32 32"><path d="M2 4h29v23H2z" fill="#b5b5bb" stroke="#666" stroke-width="2"/><path d="M5 7h17v5H5z" fill="#222"/><path d="M5 16h23M5 20h23M5 24h23" stroke="#334a80" stroke-width="2.500" stroke-dasharray="3.500 1.500"/></symbol>
<symbol id="i-frame" viewBox="0 0 16 16"><path d="M4 12V3h8v9M4 5q4-2 8 0" fill="none" stroke="#222" stroke-width="1.200"/><path d="M2 12Q0 7 3 3M14 12q2-5-1-9" fill="none" stroke="#333"/><path d="M3 2h2v2H3zM11 2h2v2h-2zM3 11h1v2H3zM12 11h1v2h-1z" fill="#d11"/></symbol>
<symbol id="i-tm" viewBox="0 0 16 16"><path d="M4 1.500h7M7.500 2v6M4 8h7" stroke="#3a5da8" stroke-width="1.200"/><path d="M0 11h16" stroke="#555" stroke-width="1.500"/><path d="M9 10.500l7-3.500v3.500z" fill="#d22"/><path d="M0 11.500h8L0 15z" fill="#22d"/></symbol>
<symbol id="i-tn" viewBox="0 0 16 16"><path d="M0 1h16v5H0z" fill="#33f"/><path d="M0 1h16v2H0z" fill="#448"/><text x="8" y="14" font-size="9" font-weight="700" text-anchor="middle" font-family="Liberation Sans">N</text></symbol>
<symbol id="i-tv" viewBox="0 0 16 16"><path d="M0 4.500h16" stroke="#555" stroke-width="1.500"/><path d="M8 4l8-4v4z" fill="#d22"/><path d="M0 5h8l-8 3z" fill="#22d"/><text x="9" y="14" font-size="8" font-weight="700" text-anchor="middle" font-family="Liberation Sans">Vz</text></symbol>
<symbol id="i-ty" viewBox="0 0 16 16"><path d="M0 4.500h16" stroke="#555" stroke-width="1.500"/><path d="M8 4l8-4v4z" fill="#d22"/><path d="M0 5h8l-8 3z" fill="#22d"/><text x="8" y="14" font-size="8" font-weight="700" text-anchor="middle" font-family="Liberation Sans">My</text></symbol>
</defs>
</svg>

<header class="titlebar">
  <svg class="logo"><use href="#i-logo"/></svg>
  <h1>RFEM 5.25.01 x64 - [001710, KZ1*]</h1>
  <div class="wbtns">
    <button aria-label="Minimalizovat"><svg viewBox="0 0 20 20"><path d="M0 9h20" stroke="#000" stroke-width="2"/></svg></button>
    <button aria-label="Obnovit"><svg viewBox="0 0 20 20"><path d="M1 5h14v14H1zM5 5V1h14v14h-4" fill="none" stroke="#000" stroke-width="2"/></svg></button>
    <button aria-label="Zavřít"><svg viewBox="0 0 20 20"><path d="M1 1l18 18M19 1L1 19" stroke="#000" stroke-width="2"/></svg></button>
  </div>
</header>

<nav class="menubar">
  <span class="grip"></span>
  <svg class="app"><use href="#i-app"/></svg>
  <button><u>S</u>oubor</button><button>Úpr<u>a</u>vy</button><button><u>Z</u>obrazit</button><button>Vlož<u>i</u>t</button><button>Vý<u>p</u>očet</button><button>Výsled<u>k</u>y</button><button>Nástro<u>j</u>e</button><button><u>T</u>abulka</button><button>Nasta<u>v</u>ení</button><button>Pří<u>d</u>avné moduly</button><button><u>O</u>kno</button><button><u>N</u>ápověda</button>
  <div class="mdi">
    <button aria-label="Minimalizovat okno"><svg viewBox="0 0 10 10"><path d="M1 8h7" stroke="#555" stroke-width="2"/></svg></button>
    <button aria-label="Obnovit okno"><svg viewBox="0 0 10 10"><path d="M1 3h6v5H1zM3 1h6v5" fill="none" stroke="#777"/></svg></button>
    <button aria-label="Zavřít okno"><svg viewBox="0 0 10 10"><path d="M1 1l8 8M9 1L1 9" stroke="#777" stroke-width="1.500"/></svg></button>
  </div>
</nav>

<div class="bars">
<div class="barrow">
  <div class="bar"><span class="grip"></span>
    <button aria-label="Nový"><svg><use href="#i-new"/></svg></button><button aria-label="Otevřít"><svg><use href="#i-open"/></svg></button><button aria-label="Archiv"><svg><use href="#i-cab"/></svg></button><button aria-label="Bloky"><svg><use href="#i-cabb"/></svg></button><button aria-label="Uložit"><svg><use href="#i-save"/></svg></button><button aria-label="Protokol"><svg><use href="#i-note"/></svg></button><button aria-label="Tisk"><svg><use href="#i-print"/></svg></button><button aria-label="Náhled"><svg><use href="#i-prev"/></svg></button><i></i>
    <button aria-label="Zpět"><svg><use href="#i-undo"/></svg></button><button aria-label="Znovu"><svg><use href="#i-redo"/></svg></button><i></i>
    <button aria-label="Výběr rovnoběžníkem"><svg><use href="#i-selp"/></svg></button><button aria-label="Výběr elipsou"><svg><use href="#i-sele"/></svg></button><button aria-label="Výběr mezikružím"><svg><use href="#i-selc"/></svg></button><button aria-label="Výběr přidat"><svg><use href="#i-selr"/></svg></button><button aria-label="Speciální výběr"><svg><use href="#i-seln"/></svg></button><i></i>
    <button class="on" aria-label="Navigátor"><svg><use href="#i-list"/></svg></button><button class="on" aria-label="Tabulky"><svg><use href="#i-tab"/></svg></button><i></i>
    <button aria-label="Nový zatěžovací stav"><svg><use href="#i-load"/></svg></button>
    <select class="combo" aria-label="Zatěžovací stav"><option>KZ1 - 1.35G + 1.5QiB</option></select>
    <button aria-label="Předchozí"><svg><use href="#i-left"/></svg></button><button aria-label="Další"><svg><use href="#i-right"/></svg></button>
    <button class="on" aria-label="Zobrazit zatížení"><svg><use href="#i-eyel"/></svg></button><button class="on" aria-label="Hodnoty zatížení"><svg><use href="#i-xl"/></svg></button><button class="on" aria-label="Zobrazit výsledky"><svg><use href="#i-eyed"/></svg></button><button class="on" aria-label="Hodnoty výsledků"><svg><use href="#i-xd"/></svg></button><i></i>
    <button aria-label="Kontrola"><svg><use href="#i-glass"/></svg></button><button aria-label="Výpočet vybraných"><svg><use href="#i-abaw"/></svg></button><button aria-label="Spočítat vše"><svg><use href="#i-aba"/></svg></button>
  </div>
  <div class="bar"><span class="grip"></span>
    <button aria-label="Rastr"><svg><use href="#i-hand"/></svg></button><button aria-label="Uchop"><svg><use href="#i-snap"/></svg></button><button aria-label="Rovina XY"><svg><use href="#i-plan"/></svg></button><button aria-label="Rovina YZ"><svg><use href="#i-plan2"/></svg></button><button class="on" aria-label="Rovina XZ"><svg><use href="#i-plan3"/></svg></button><button aria-label="Pomocný rastr"><svg><use href="#i-gridr"/></svg></button><button aria-label="Souřadný systém"><svg><use href="#i-axw"/></svg></button><i></i>
    <button aria-label="Kopírovat"><svg><use href="#i-copy"/></svg></button><button aria-label="Rotace"><svg><use href="#i-rot"/></svg></button><button aria-label="Zrcadlit"><svg><use href="#i-mir"/></svg></button><button aria-label="Spojit"><svg><use href="#i-xnode"/></svg></button><button aria-label="Informace"><svg><use href="#i-info"/></svg></button><button aria-label="Nastavení protokolu"><svg><use href="#i-prot"/></svg></button><button aria-label="Možnosti"><svg><use href="#i-gear"/></svg></button>
  </div>
  <div class="bar"><span class="grip"></span>
    <button aria-label="Import"><svg><use href="#i-mdn"/></svg></button><button aria-label="Export"><svg><use href="#i-mup"/></svg></button><button aria-label="Import modelu"><svg><use href="#i-pdn"/></svg></button><button aria-label="Export modelu"><svg><use href="#i-pup"/></svg></button>
  </div>
</div>
<div class="barrow">
  <div class="bar"><span class="grip"></span>
    <button class="dd" aria-label="Nový uzel"><svg><use href="#i-nnode"/></svg></button><button aria-label="Nová linie"><svg><use href="#i-nline"/></svg></button><button class="dd" aria-label="Nový prut"><svg><use href="#i-nmem"/></svg></button><button class="dd" aria-label="Nová polylinie"><svg><use href="#i-npoly"/></svg></button><i></i>
    <button aria-label="Uzlová podpora"><svg><use href="#i-nsup"/></svg></button><button aria-label="Liniová podpora"><svg><use href="#i-nsup2"/></svg></button><button aria-label="Podpora plochy"><svg><use href="#i-nsurf"/></svg></button><i></i>
    <button class="dd" aria-label="Kóta"><svg><use href="#i-ndim"/></svg></button><button aria-label="Komentář"><svg><use href="#i-nxx"/></svg></button><button aria-label="Pomocné linie"><svg><use href="#i-ngrid"/></svg></button><i></i>
    <button class="dd" aria-label="Nová plocha"><svg><use href="#i-nrect"/></svg></button><button class="dd" aria-label="Otvor"><svg><use href="#i-nopen"/></svg></button><button class="dd" aria-label="Stěna"><svg><use href="#i-nwall"/></svg></button><button aria-label="Těleso"><svg><use href="#i-nsol"/></svg></button><button class="dd" aria-label="Sada"><svg><use href="#i-nset"/></svg></button><i></i>
    <button class="dd" aria-label="Kombinace"><svg><use href="#i-comb"/></svg></button><button aria-label="Zatížení na uzel"><svg><use href="#i-nnl"/></svg></button><button aria-label="Zatížení na prut"><svg><use href="#i-nml"/></svg></button><button aria-label="Zatížení na linii"><svg><use href="#i-nml"/></svg></button><button aria-label="Zatížení na plochu"><svg><use href="#i-nsl"/></svg></button><button class="dd" aria-label="Zatížení na těleso"><svg><use href="#i-nbl"/></svg></button>
  </div>
  <div class="bar"><span class="grip"></span>
    <button aria-label="Posun"><svg><use href="#i-pan"/></svg></button><button aria-label="Zoom oknem"><svg><use href="#i-zwin"/></svg></button><button aria-label="Zobrazit vše"><svg><use href="#i-zx"/></svg></button><button aria-label="Izometrie"><svg><use href="#i-cube"/></svg></button><button aria-label="Pohledy"><svg><use href="#i-multi"/></svg></button><i></i>
    <button aria-label="Pohled X"><svg><use href="#i-vx"/></svg></button><button aria-label="Pohled Y"><svg><use href="#i-vy"/></svg></button><button aria-label="Pohled Z"><svg><use href="#i-vz"/></svg></button><button class="dd" aria-label="Pohled -X"><svg><use href="#i-vmx"/></svg></button><button class="dd" aria-label="Viditelnosti"><svg><use href="#i-micro"/></svg></button><i></i>
    <button class="dd" aria-label="Rendering"><svg><use href="#i-ren"/></svg></button>
  </div>
  <div class="bar"><span class="grip"></span>
    <button aria-label="Deformace"><svg><use href="#i-def"/></svg></button><button aria-label="Panel"><svg><use href="#i-panel"/></svg></button><i></i>
    <button class="on" aria-label="Pruty"><svg><use href="#i-memr"/></svg></button><button aria-label="Plochy"><svg><use href="#i-surfr"/></svg></button><button aria-label="Tělesa"><svg><use href="#i-solr"/></svg></button><button aria-label="Reakce"><svg><use href="#i-reac"/></svg></button><button aria-label="Řezy"><svg><use href="#i-sec"/></svg></button><button class="dd" aria-label="Okna výsledků"><svg><use href="#i-four"/></svg></button><button aria-label="Průběhy"><svg><use href="#i-sino"/></svg></button><button aria-label="Tabulky výsledků"><svg><use href="#i-rtab"/></svg></button><i></i>
    <button aria-label="Legenda"><svg><use href="#i-leg"/></svg></button><button class="dd" aria-label="Upravit"><svg><use href="#i-wand"/></svg></button><button class="dd" aria-label="Barvy"><svg><use href="#i-flag"/></svg></button>
  </div>
</div>
<div class="barrow last">
  <div class="bar"><span class="grip"></span><button class="dd" aria-label="Střecha 1"><svg><use href="#i-w1"/></svg></button><button class="dd" aria-label="Střecha 2"><svg><use href="#i-w2"/></svg></button></div>
  <div class="bar"><span class="grip"></span><button class="dd" aria-label="Vítr 1"><svg><use href="#i-w3"/></svg></button><button class="dd" aria-label="Vítr 2"><svg><use href="#i-w4"/></svg></button><button class="dd" aria-label="Vítr 3"><svg><use href="#i-w5"/></svg></button><button class="dd" aria-label="Vítr 4"><svg><use href="#i-w6"/></svg></button><button class="dd" aria-label="Vítr 5"><svg><use href="#i-w7"/></svg></button></div>
</div>
</div>

<main class="work">
<aside class="navi">
  <div class="phead"><h2>Navigátor projektu - Výsledky</h2><button aria-label="Připnout"><svg><use href="#i-pin"/></svg></button><button aria-label="Zavřít panel"><svg><use href="#i-x"/></svg></button></div>
  <div class="treebox">
  <ul class="tree">
    <li><div class="row"><button class="ex minus" aria-label="Sbalit"></button><label><input type="checkbox"><svg><use href="#i-frame"/></svg><span>Globální deformace</span></label></div>
      <ul>
        <li><div class="row"><label><input type="radio" name="gd"><svg><use href="#i-frame"/></svg><span>u</span></label></div></li>
        <li><div class="row"><label><input type="radio" name="gd"><svg><use href="#i-frame"/></svg><span>u<small>X</small></span></label></div></li>
        <li><div class="row"><label><input type="radio" name="gd"><svg><use href="#i-frame"/></svg><span>u<small>Z</small></span></label></div></li>
        <li><div class="row"><label><input type="radio" name="gd" checked><svg><use href="#i-frame"/></svg><span><em>φ</em><small>Y</small></span></label></div></li>
      </ul></li>
    <li><div class="row"><button class="ex minus" aria-label="Sbalit"></button><label><input type="checkbox" checked><svg><use href="#i-tm"/></svg><span>Pruty</span></label></div>
      <ul>
        <li><div class="row"><button class="ex minus" aria-label="Sbalit"></button><label><input type="checkbox" class="mix"><svg><use href="#i-tm"/></svg><span>Lokální deformace</span></label></div>
          <ul>
            <li><div class="row"><label><input type="radio" name="ld"><svg><use href="#i-tm"/></svg><span>u<small>x</small></span></label></div></li>
            <li><div class="row"><label><input type="radio" name="ld"><svg><use href="#i-tm"/></svg><span>u<small>z</small></span></label></div></li>
            <li><div class="row"><label><input type="radio" name="ld"><svg><use href="#i-tm"/></svg><span><em>φ</em><small>y</small></span></label></div></li>
          </ul></li>
        <li><div class="row"><button class="ex minus" aria-label="Sbalit"></button><label><input type="checkbox" class="mix"><svg><use href="#i-tm"/></svg><span>Vnitřní síly</span></label></div>
          <ul>
            <li><div class="row"><label><input type="radio" name="ld" checked><svg><use href="#i-tn"/></svg><span>N</span></label></div></li>
            <li><div class="row"><label><input type="radio" name="ld"><svg><use href="#i-tv"/></svg><span>V<small>z</small></span></label></div></li>
            <li><div class="row"><label><input type="radio" name="ld"><svg><use href="#i-ty"/></svg><span>M<small>y</small></span></label></div></li>
          </ul></li>
        <li><div class="row"><button class="ex minus" aria-label="Sbalit"></button><label><input type="checkbox" class="mix"><svg><use href="#i-tm"/></svg><span>Napětí</span></label></div>
          <ul>
            <li><div class="row"><label><input type="radio" name="ld"><svg><use href="#i-tm"/></svg><span><em>σ</em><small>x</small></span></label></div></li>
            <li><div class="row"><label><input type="radio" name="ld"><svg><use href="#i-tm"/></svg><span><em>τ</em><small>y</small></span></label></div></li>
            <li><div class="row"><label><input type="radio" name="ld"><svg><use href="#i-tm"/></svg><span><em>τ</em><small>z</small></span></label></div></li>
            <li><div class="row"><button class="ex" aria-label="Rozbalit"></button><label><input type="checkbox" class="mix"><svg><use href="#i-tm"/></svg><span>Elastické složky napětí</span></label></div></li>
            <li><div class="row"><button class="ex" aria-label="Rozbalit"></button><label><input type="checkbox" class="mix"><svg><use href="#i-tm"/></svg><span>Elastická srovnávací napětí</span></label></div></li>
          </ul></li>
        <li><div class="row"><button class="ex minus" aria-label="Sbalit"></button><label><input type="checkbox" class="mix"><svg><use href="#i-tm"/></svg><span>Přetvoření</span></label></div>
          <ul>
            <li><div class="row"><button class="ex minus" aria-label="Sbalit"></button><label><input type="checkbox" class="mix"><svg><use href="#i-tm"/></svg><span>Celková přetvoření průřezu</span></label></div>
              <ul>
                <li><div class="row"><label><input type="radio" name="ld"><svg><use href="#i-tm"/></svg><span><em>ε</em><small>x,max</small></span></label></div></li>
                <li><div class="row"><label><input type="radio" name="ld"><svg><use href="#i-tm"/></svg><span><em>ε</em><small>x,min</small></span></label></div></li>
                <li><div class="row"><label><input type="radio" name="ld"><svg><use href="#i-tm"/></svg><span>max<b>|</b><em>ε</em><small>x</small><b>|</b></span></label></div></li>
                <li><div class="row"><label><input type="radio" name="ld"><svg><use href="#i-tm"/></svg><span><em>γ</em><small>xz</small></span></label></div></li>
                <li><div class="row"><label><input type="radio" name="ld"><svg><use href="#i-tm"/></svg><span><em>κ</em><small>y</small></span></label></div></li>
              </ul></li>
          </ul></li>
      </ul></li>
    <li><div class="row"><button class="ex" aria-label="Rozbalit"></button><label><input type="checkbox"><svg><use href="#i-frame"/></svg><span>Kritéria</span></label></div></li>
    <li><div class="row"><button class="ex" aria-label="Rozbalit"></button><label><input type="checkbox"><svg><use href="#i-reac"/></svg><span>Podporové reakce</span></label></div></li>
    <li><div class="row"><button class="ex" aria-label="Rozbalit"></button><label><input type="checkbox"><svg><use href="#i-frame"/></svg><span>Rozložení zatížení</span></label></div></li>
  </ul>
  </div>
  <div class="ntabs">
    <button><svg viewBox="0 0 16 16"><path d="M0 1h11v9H0z" fill="#f3c62c" stroke="#a67c10"/><path d="M6 3h10v2H6z" fill="#46a"/><circle cx="9" cy="9" r="3.500" fill="#cfe4fa" stroke="#567"/><path d="M11 11l4 4" stroke="#456" stroke-width="2"/></svg>Data</button>
    <button><svg viewBox="0 0 16 16"><path d="M1 4h12v11H1z" fill="#dde6f5" stroke="#2b4f9c"/><path d="M3 8h8M3 11h8" stroke="#46a"/><path d="M5 2l9-1 1 5-7 1z" fill="#c79a78" stroke="#654"/></svg>Zobrazit</button>
    <button><svg viewBox="0 0 16 16"><path d="M1 14h14M4 12h9L12 3 6 9" fill="#9bb0e0" stroke="#2f4fb0" stroke-width="2"/></svg>Pohledy</button>
    <button class="cur"><svg viewBox="0 0 16 16"><path d="M0 6l6-4 9 4-8 9z" fill="#2bd04a"/><path d="M1 6l5-3 8 3-6 2z" fill="#e33"/><path d="M1 7l7 2 6-2-2 3-4 2z" fill="#fe3"/><path d="M3 10l5 2 3-1-4 4z" fill="#22c"/></svg>Výsledky</button>
  </div>
</aside>

<section class="right">
  <div class="view">
    <p class="cap">Vnitřní síly N [kN]<br>KZ1 : 1.35G + 1.5QiB</p>
    <svg class="model" viewBox="0 0 2092 972" role="img" aria-label="Sloup s osovou silou">
      <path d="M886 921v8l67 10 14-6z" fill="#80ff80"/><path d="M886 921v8l12-6z" fill="#3cf03c"/>
      <path d="M838 164l128 19v750l-128-19z" fill="#bebebe"/>
      <path d="M966 183l74-33v750l-74 33z" fill="#a6a6a6"/>
      <path d="M912 131l128 19-74 33-128-19z" fill="#8b0000" stroke="#f00" stroke-width="1.500"/>
      <path d="M838 164v750M966 183v750M1040 150v750M912 131v750" stroke="#f01c1c" stroke-opacity=".75" stroke-width="2"/>
      <path d="M838 914l74-33 128 19-74 33z" fill="none" stroke="#f00" stroke-width="1.500"/>
      <path d="M901 154v-2l38 5" fill="none" stroke="#f00" stroke-width="1.500"/>
      <path d="M939 10v70" stroke="#000080" stroke-width="2"/><path d="M935 78h8l-4 8z" fill="#000080"/>
      <text x="943" y="15" class="ld">1876.500 kN</text>
      <text x="858" y="529" class="rv">-3376.50</text>
    </svg>
    <p class="cap">Max N: -3376.50, Min N: -3376.50 kN</p>
  </div>
  <div class="tpanel">
    <div class="phead"><h2>4.10 Štíhlosti prutů</h2><button aria-label="Připnout"><svg><use href="#i-pin"/></svg></button><button aria-label="Zavřít panel"><svg><use href="#i-x"/></svg></button></div>
    <div class="bar tbar">
      <button aria-label="Geometrie"><svg><use href="#i-t1"/></svg></button><button aria-label="Zatížení"><svg><use href="#i-t2"/></svg></button><button aria-label="Stavy"><svg><use href="#i-t3"/></svg></button><button class="on" aria-label="Výsledky"><svg><use href="#i-t4"/></svg></button><button aria-label="Dynamika"><svg><use href="#i-t5"/></svg></button><i></i>
      <button aria-label="Předchozí tabulka"><svg><use href="#i-t6"/></svg></button><button aria-label="Další tabulka"><svg><use href="#i-t7"/></svg></button><i></i>
      <button class="on" aria-label="Synchronizace výběru"><svg><use href="#i-t8"/></svg></button><button class="on" aria-label="Synchronizace tabulky"><svg><use href="#i-t9"/></svg></button><i></i>
      <button aria-label="Vybrané objekty"><svg><use href="#i-t10"/></svg></button><button aria-label="Obarvit řádky"><svg><use href="#i-t11"/></svg></button><i></i>
      <select class="combo small" aria-label="Kombinace zatížení"><option>KZ1 - 1.35G + 1.5QiB</option></select><i></i>
      <button aria-label="Předchozí stav"><svg><use href="#i-left"/></svg></button><button aria-label="Další stav"><svg><use href="#i-right"/></svg></button><i></i>
      <button aria-label="Filtr"><svg><use href="#i-filt"/></svg></button><i></i><button aria-label="Průřez"><svg><use href="#i-tinf"/></svg></button><i></i><button class="on" aria-label="Sloupce"><svg><use href="#i-bars"/></svg></button><i></i><button aria-label="Export do Excelu"><svg><use href="#i-xls"/></svg></button><i></i><button aria-label="Kalkulačka"><svg><use href="#i-calc"/></svg></button>
    </div>
    <div class="grid">
      <table>
        <colgroup><col class="c0"><col class="ca"><col class="cn"><col class="cn"><col class="cn"><col class="cn"><col class="cn"><col></colgroup>
        <thead>
          <tr class="let"><th></th><th class="sel">A</th><th>B</th><th>C</th><th>D</th><th>E</th><th>F</th><th class="fill"></th></tr>
          <tr class="t1"><th class="rh">Prut</th><th></th><th>Délka</th><th colspan="2">Součinitele vzpěrné délky [</th><th colspan="2">Štíhlost [-]</th><th></th></tr>
          <tr class="t2"><th class="rh">č.</th><th>Průřez</th><th>L [m]</th><th>k<small>cr,y</small></th><th>k<small>cr,z</small></th><th><em>λ</em><small>y</small></th><th><em>λ</em><small>z</small></th><th></th></tr>
        </thead>
        <tbody><tr><th class="sel">1</th><td class="l">1 - Obdélník 400/</td><td>2.100</td><td>0.590</td><td>0.590</td><td>10.73</td><td>10.73</td><td class="fill"></td></tr></tbody>
      </table>
    </div>
    <div class="sheets">
      <button>Uzly - deformace</button><button>Pruty - lokální deformace</button><button>Pruty - globální deformace</button><button>Pruty - vnitřní síly</button><button>Pruty - Celková přetvoření průřezu</button><button>Pruty - parametry pro vzpěr</button><button class="cur">Štíhlosti prutů</button><button>Průřezy - vnitřní síly</button>
      <div class="scr"><button aria-label="První"><svg viewBox="0 0 12 12"><path d="M3 2v8" stroke="#000" stroke-width="2"/><path d="M9 2v8L5 6z"/></svg></button><button aria-label="Vlevo"><svg viewBox="0 0 12 12"><path d="M9 0v12L3 6z"/></svg></button><button aria-label="Vpravo"><svg viewBox="0 0 12 12"><path d="M3 0v12l6-6z" fill="#999"/></svg></button><button aria-label="Poslední"><svg viewBox="0 0 12 12"><path d="M9 2v8" stroke="#999" stroke-width="2"/><path d="M3 2v8l4-4z" fill="#999"/></svg></button></div>
    </div>
    <svg class="marks" viewBox="0 0 920 214" aria-hidden="true"><g fill="none" stroke-width="5"><path d="M2 4h228v40H2z" stroke="#c00000"/><path d="M653 175h261v34H653z" stroke="#ee0000"/><path d="M235 29l455 131" stroke="#f00"/></g><path d="M709 167l-23-17-6 20z" fill="#f00"/></svg>
  </div>
</section>
</main>

<footer class="status">
  <span class="msg">Pracovní rovina</span>
  <button class="s1">UCHOP</button><button class="s2 up">RASTR</button><button class="s3">KARTEZ</button><button class="s4">OUCHOP</button><button class="s2">VLINIE</button><button class="s5">DXF</button>
  <span class="f cs">SS: Glob</span><span class="f pl">Rovina: X</span><span class="f co">X:&nbsp; 3.58</span><span class="f co">Y:&nbsp; 0.00</span><span class="f co">Z:&nbsp; -1.10</span>
</footer>
</body>
</html>
```
FILE: styles.css
```css
* { box-sizing: border-box; }
body {
  margin: 0;
  height: 100vh;
  display: flex;
  flex-direction: column;
  overflow: hidden;
  background: #d0d4dd;
  color: #000;
  font: 22px/28px "Open Sans", "Noto Sans", sans-serif;
}
button { margin: 0; padding: 0; border: 0; background: none; font: inherit; color: inherit; }
h1, h2, p, ul { margin: 0; padding: 0; font: inherit; list-style: none; }
.defs { position: absolute; width: 0; height: 0; }

/* title bar */
.titlebar { flex: none; height: 45px; display: flex; align-items: center; gap: 5px; padding: 0 3px 0 2px; background: #fff; font-size: 23px; }
.titlebar .logo { width: 32px; height: 30px; }
.titlebar h1 { flex: 1; }
.wbtns { display: flex; height: 42px; }
.wbtns button { width: 92px; display: grid; place-items: center; }
.wbtns svg { width: 20px; height: 20px; }

/* menu */
.menubar { flex: none; height: 46px; display: flex; align-items: center; padding-left: 4px; color: #4a505c; }
.menubar .grip { width: 6px; }
.menubar .app { width: 32px; height: 30px; margin-right: 6px; }
.menubar > button { padding: 0 7px; }
.menubar u { text-underline-offset: 3px; }
.mdi { margin-left: auto; display: flex; padding-right: 14px; gap: 25px; }
.mdi button { width: 10px; height: 14px; display: grid; place-items: center; }
.mdi svg { width: 10px; height: 10px; }

/* toolbars */
.bars { flex: none; }
.barrow { display: flex; height: 48px; gap: 2px; }
.barrow.last { padding-left: 5px; padding-bottom: 1px; }
.bar {
  display: flex;
  align-items: center;
  padding-bottom: 1px;
  height: 48px;
  background: linear-gradient(#eaeef8, #e4e8f1 35%, #d3d7e0 95%, #a7adb7 96%);
  border-radius: 4px 4px 0 0;
}
.grip { flex: none; width: 10px; height: 22px; background: radial-gradient(circle at 5px 3px, #fff 0 1px, #9aa0aa 1px 2px, transparent 2px) 0 0 / 10px 5px; }
.bar button { flex: none; width: 44px; height: 44px; display: flex; align-items: center; padding: 0 6px; }
.bar svg { flex: none; width: 32px; height: 32px; }
.bar button.dd { width: 66px; }
.dd::after { content: ""; margin-left: 12px; border: 5px solid transparent; border-top: 7px solid #7c7f84; border-bottom: 0; }
.bar > i { flex: none; width: 8px; height: 28px; background: linear-gradient(90deg, transparent 3px, #a9afb9 3px 4px, #fff 4px 5px, transparent 5px); }
.bar button.on { border: 1px solid #a3aab4; padding: 0 5px; border-radius: 3px; background: linear-gradient(#fbd3a6, #fdc186 30%, #fbae55 40%, #fdc867 70%, #fff0a0 96%); }
.combo {
  appearance: none;
  width: 216px;
  height: 31px;
  margin: 0 2px;
  padding: 0 34px 0 3px;
  border: 1px solid #fff;
  border-radius: 0;
  font: inherit;
  color: #000;
  background:
    linear-gradient(to top right, transparent 50%, #7c7f84 51%) right 16px top 12px / 5px 6px no-repeat,
    linear-gradient(to top left, transparent 50%, #7c7f84 51%) right 11px top 12px / 5px 6px no-repeat,
    linear-gradient(#dfe3ec, #dfe3ec) right top / 32px 100% no-repeat,
    #fff;
}
.combo.small { width: 196px; }

/* work area */
.work { flex: 1; min-height: 0; display: flex; gap: 4px; }
.navi { flex: none; width: 460px; display: flex; flex-direction: column; }
.phead { flex: none; height: 40px; display: flex; align-items: center; gap: 8px; padding: 0 7px 1px 4px; background: #b8bfca; color: #4a4d52; border-top: 1px solid #eef1f7; }
.phead h2 { flex: 1; }
.phead svg { display: block; width: 17px; height: 17px; }
.treebox { flex: 1; min-height: 0; background: #fcfbf3; border: 2px solid #e9eef8; border-right: 2px solid #a7adb7; border-bottom: 1px solid #8a8f98; padding: 3px 0 0 4px; font-size: 23px; }
.tree ul { padding-left: 19px; }
.tree li { position: relative; }
.tree li::before { content: ""; position: absolute; left: 8px; top: 0; bottom: 0; border-left: 1px dotted #777; }
.tree li:last-child::before { bottom: auto; height: 17px; }
.tree > li:first-child::before { top: 17px; }
.row { height: 34px; display: flex; align-items: center; }
.row::before { content: ""; flex: none; width: 13px; margin-left: 8px; border-top: 1px dotted #777; }
.row:has(.ex)::before { display: none; }
.ex {
  position: relative;
  flex: none;
  width: 16px;
  height: 16px;
  margin-right: 5px;
  border: 1px solid #8d8d8d;
  border-radius: 2px;
  background: linear-gradient(#27459a, #27459a) center / 8px 2px no-repeat, linear-gradient(#27459a, #27459a) center / 2px 8px no-repeat, linear-gradient(#fff, #e2e2e2);
}
.ex.minus { background: linear-gradient(#27459a, #27459a) center / 8px 2px no-repeat, linear-gradient(#fff, #e2e2e2); }
.tree label { display: flex; align-items: center; white-space: nowrap; }
.tree label svg { width: 16px; height: 16px; margin: 0 5px 3px 2px; }
.tree input { appearance: none; flex: none; display: grid; place-items: center; width: 13px; height: 13px; margin: 0 0 3px; border: 1px solid #444; background: linear-gradient(135deg, #c9ceda, #fff); }
.tree input[type=radio] { border-radius: 50%; border-color: #555; }
.tree input[type=radio]:checked { background: radial-gradient(circle, #000 2px, #eef 4px); }
.tree input[type=checkbox]:checked::before { content: ""; width: 4px; height: 8px; margin-bottom: 2px; border: solid #000; border-width: 0 2px 2px 0; transform: rotate(40deg); }
.tree input.mix { background: linear-gradient(#999, #999) center / 7px 7px no-repeat, #f4f4f4; }
small { font-size: 18px; }
.tree em { font: 24px/24px "Liberation Serif", serif; }
.tree b { font: 23px/24px "Liberation Sans", Arial, sans-serif; }
.ntabs { flex: none; height: 42px; display: flex; align-items: flex-start; padding-left: 4px; gap: 7px; color: #565b66; }
.ntabs button { display: flex; align-items: center; gap: 2px; height: 38px; padding: 0 2px; }
.ntabs svg { width: 16px; height: 16px; }
.ntabs .cur { background: linear-gradient(#e4e8f0, #f4f6fa); border: 1px solid #bdeef0; border-top: 0; border-radius: 0 0 3px 3px; }

.right { flex: 1; min-width: 0; display: flex; flex-direction: column; gap: 5px; }
.view { flex: 1; min-height: 0; position: relative; background: #fff; border: 2px solid #6e6e6e; border-right: 1px solid #e3e3e3; border-bottom: 1px solid #e3e3e3; display: flex; flex-direction: column; justify-content: space-between; padding: 5px 4px 6px; }
.cap { font: 11px/14px "Liberation Sans", Arial, sans-serif; }
.model { position: absolute; inset: 0; width: 100%; height: 100%; }
.model text { font: 10px "Liberation Sans", Arial, sans-serif; }
.model .ld { fill: #000080; }
.model .rv { fill: #f00; }

/* table panel */
.tpanel { flex: none; position: relative; height: 267px; background: #f0f0f0; border-bottom: 1px solid #a7adb7; font: 21px/25px "Liberation Sans", Arial, sans-serif; }
.tpanel .phead, .tpanel .combo { font-family: "Open Sans", "Noto Sans", sans-serif; font-size: 22px; }
.tbar { padding-left: 9px; border-radius: 0; }
.grid { border: 2px solid #6e6e6e; border-width: 2px 1px 2px; padding: 0 2px 4px 3px; background: #f0f0f0; }
table { width: 100%; table-layout: fixed; border-collapse: collapse; }
.c0 { width: 78px; }
.ca { width: 182px; }
.cn { width: 129px; }
th, td { padding: 0; font-weight: 400; border-right: 1px solid #a0a0a0; overflow: hidden; white-space: nowrap; }
thead tr:first-child th { border-top: 1px solid #a0a0a0; }
th:first-child, td:first-child { border-left: 1px solid #a0a0a0; }
.let th { height: 26px; background: #e1e1e1; border-bottom: 1px solid #696969; }
.let th:first-child { border-bottom: 0; }
.let th.sel, tbody th.sel { background: #0078d7; color: #fff; }
.t1 th { height: 28px; }
.t2 th { height: 29px; border-bottom: 1px solid #a0a0a0; }
.t1 .rh, .t2 .rh { background: #e1e1e1; }
.t1 th:last-child, .t2 th:last-child, .fill { border-right: 0; }
tbody th, tbody td { height: 28px; border-bottom: 1px solid #a0a0a0; }
tbody td { background: #ebebad; text-align: right; padding-right: 8px; }
tbody td.l { text-align: left; padding-left: 8px; }
tbody td.fill { background: #f0f0f0; }
table em { font: 21px/24px "Liberation Serif", serif; }
.sheets { display: flex; height: 26px; border-bottom: 1px solid #dcdcdc; }
.sheets > button { height: 25px; padding: 0 8px 0 5px; white-space: nowrap; background: #e1e1e1; border: 1px solid #696969; border-width: 0 1px 1px 0; border-radius: 0 0 4px 4px; }
.sheets > .cur { background: #f8f8f8; }
.scr { margin-left: auto; display: flex; }
.scr button { width: 26px; height: 25px; display: grid; place-items: center; border: 1px solid #888; border-left-color: #fff; border-top-color: #fff; }
.scr svg { width: 12px; height: 12px; }
.marks { position: absolute; left: -2px; top: -4px; width: 920px; height: 214px; overflow: visible; pointer-events: none; }

/* status bar */
.status { flex: none; height: 35px; display: flex; overflow: hidden; background: linear-gradient(#dfe2e6, #b9bfca 20%, #a6adb5 45%, #a9b0ba 60%, #b6bcc6 75%); font: 21px/34px "Liberation Sans", Arial, sans-serif; color: #26282c; border-top: 1px solid #c9cdd4; }
.status .msg { flex: 1; padding-left: 4px; line-height: 38px; }
.status button { flex: none; margin-right: 3px; border: 1px solid #fff; border-left: 2px solid #000; border-top: 2px solid #000; border-bottom: 0; line-height: 26px; height: 35px; padding-bottom: 6px; white-space: nowrap; }
.status .up { border-color: #fff; border-width: 1px 1px 0; padding-bottom: 8px; }
.s1 { width: 83px; }
.s2 { width: 74px; }
.s3 { width: 105px; }
.s4 { width: 100px; }
.s5 { width: 49px; }
.f { flex: none; overflow: hidden; white-space: nowrap; border-right: 1px solid #8e949e; padding-left: 2px; line-height: 38px; }
.cs { width: 186px; text-align: right; border-left: 1px solid #8e949e; }
.pl { width: 88px; }
.co { width: 74px; }
.co:last-child { width: 73px; border-right: 0; }
```
